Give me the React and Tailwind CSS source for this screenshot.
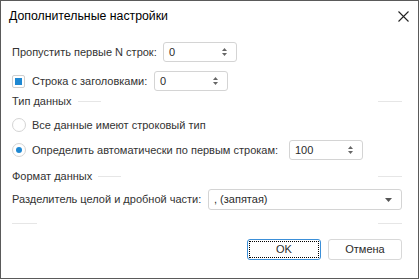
import React from "react";

function Spin({ value }) {
  return (
    <div className="w-[74px] h-[20px] shrink-0 border border-[#d4d4d4] rounded-[3px] bg-white flex items-center justify-between pl-[5px] pr-[8px]">
      <span className="text-[11px] text-[#2b2b2b] leading-none">{value}</span>
      <svg width="7" height="10" viewBox="0 0 7 10">
        <path d="M3.5 1 L6 4 L1 4 Z" fill="#666" />
        <path d="M3.5 9 L6 6 L1 6 Z" fill="#666" />
      </svg>
    </div>
  );
}

function SectionHeader({ label }) {
  return (
    <div className="flex items-center h-[16px] pl-[11px] pr-[16px]">
      <span className="text-[11px] text-[#333] whitespace-nowrap">{label}</span>
      <div className="ml-[6px] w-[23px] h-px bg-[#e6e6e6]" />
      <div className="flex-1" />
      <div className="w-[24px] h-px bg-[#e6e6e6]" />
    </div>
  );
}

export default function App() {
  return (
    <div
      className="w-[419px] h-[279px] border border-[#5a5a5a] bg-white flex flex-col text-[#333]"
      style={{ fontFamily: "'Liberation Sans', 'DejaVu Sans', sans-serif" }}
    >
      <div className="h-[30px] flex items-center justify-between pl-[8px] pr-[9px]">
        <span className="text-[12.3px] text-black whitespace-nowrap">Дополнительные настройки</span>
        <svg width="11" height="11" viewBox="0 0 11 11">
          <path d="M0.5 0.5 L10.5 10.5 M10.5 0.5 L0.5 10.5" stroke="#222" strokeWidth="1.1" />
        </svg>
      </div>

      <div className="mt-[11px] h-[20px] flex items-center pl-[11px]">
        <span className="text-[11px] w-[151px] shrink-0 whitespace-nowrap">Пропустить первые N строк:</span>
        <Spin value="0" />
      </div>

      <div className="mt-[9px] h-[20px] flex items-center pl-[11px]">
        <div className="w-[13px] h-[13px] shrink-0 border border-[#cfcfcf] rounded-[2px] flex items-center justify-center">
          <div className="w-[7px] h-[7px] bg-[#1e88d2]" />
        </div>
        <span className="ml-[7px] text-[11px] w-[122px] shrink-0 whitespace-nowrap">Строка с заголовками:</span>
        <Spin value="0" />
      </div>

      <div className="mt-[2px]">
        <SectionHeader label="Тип данных" />
      </div>

      <div className="mt-[6px] h-[20px] flex items-center pl-[11px]">
        <div className="w-[14px] h-[14px] shrink-0 rounded-full border border-[#d4d4d4] bg-white" />
        <span className="ml-[6px] text-[11px] whitespace-nowrap">Все данные имеют строковый тип</span>
      </div>

      <div className="mt-[5px] h-[20px] flex items-center pl-[11px]">
        <div className="w-[14px] h-[14px] shrink-0 rounded-full border border-[#d4d4d4] bg-white flex items-center justify-center">
          <div className="w-[6px] h-[6px] rounded-full bg-[#1e88d2]" />
        </div>
        <span className="ml-[6px] text-[11px] w-[257px] shrink-0 whitespace-nowrap">Определить автоматически по первым строкам:</span>
        <Spin value="100" />
      </div>

      <div className="mt-[8px]">
        <SectionHeader label="Формат данных" />
      </div>

      <div className="mt-[5px] h-[21px] flex items-center pl-[11px]">
        <span className="text-[11px] w-[196px] shrink-0 whitespace-nowrap">Разделитель целой и дробной части:</span>
        <div className="w-[194px] h-[21px] shrink-0 border border-[#d4d4d4] rounded-[3px] flex items-center justify-between pl-[5px] pr-[9px]">
          <span className="text-[11px] text-[#2b2b2b] whitespace-nowrap">, (запятая)</span>
          <svg width="7" height="4" viewBox="0 0 7 4">
            <path d="M0 0 L7 0 L3.5 4 Z" fill="#555" />
          </svg>
        </div>
      </div>

      <div className="mt-[13px] h-px flex pl-[11px] pr-[16px]">
        <div className="w-[25px] h-px bg-[#e6e6e6]" />
        <div className="flex-1" />
        <div className="w-[24px] h-px bg-[#e6e6e6]" />
      </div>

      <div className="mt-[15px] flex justify-end gap-[7px] pr-[16px]">
        <div className="w-[74px] h-[21px] border border-[#3b8fd8] rounded-[3px] p-[1px] bg-white">
          <div className="w-full h-full border border-dotted border-black flex items-center justify-center text-[11px] text-[#2b2b2b]">
            OK
          </div>
        </div>
        <div className="w-[74px] h-[21px] border border-[#d8d8d8] rounded-[3px] bg-white flex items-center justify-center text-[11px] text-[#2b2b2b]">
          Отмена
        </div>
      </div>
    </div>
  );
}
